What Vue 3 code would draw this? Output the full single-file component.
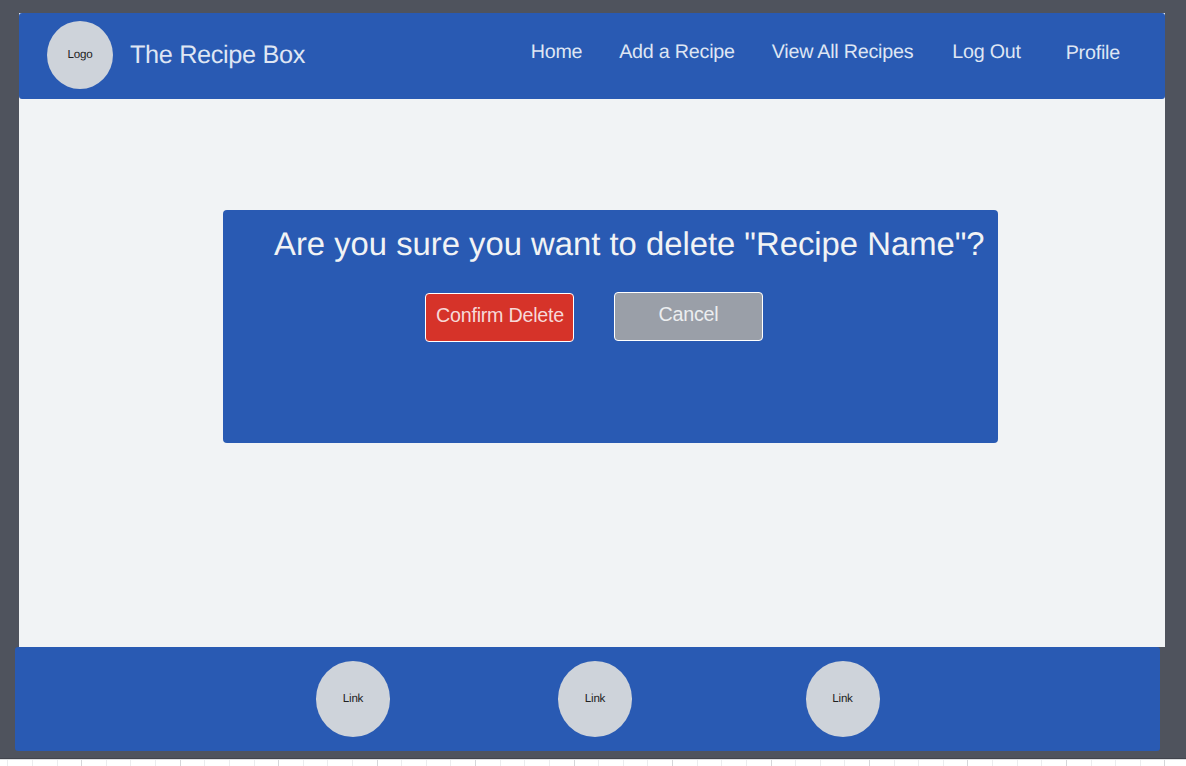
<script setup>
const navItems = [
  { label: 'Home', cls: 'home' },
  { label: 'Add a Recipe', cls: 'add' },
  { label: 'View All Recipes', cls: 'all' },
  { label: 'Log Out', cls: 'logout' },
  { label: 'Profile', cls: 'profile' }
]
const footerLinks = ['first', 'second', 'third']
</script>

<template>
  <div class="canvas">
    <div class="frame">
      <div class="page">
        <header class="header">
          <div class="logo">Logo</div>
          <h1 class="title">The Recipe Box</h1>
          <nav class="nav">
            <a v-for="item in navItems" :key="item.label" :class="item.cls">{{ item.label }}</a>
          </nav>
        </header>
        <main class="dialog">
          <h2 class="question">Are you sure you want to delete "Recipe Name"?</h2>
          <div class="actions">
            <button class="btn confirm">Confirm Delete</button>
            <button class="btn cancel">Cancel</button>
          </div>
        </main>
      </div>
      <footer class="footer">
        <a v-for="name in footerLinks" :key="name" class="link" :class="name">Link</a>
      </footer>
    </div>
    <svg class="ruler" width="1186" height="7" viewBox="0 0 1186 7">
      <rect width="1186" height="1" fill="#dcdee1" />
      <template v-for="n in 48" :key="n">
        <rect
          :x="Math.round(7.3 + (n - 1) * 24.62)"
          y="1"
          width="1"
          height="6"
          :fill="n % 4 === 0 ? '#d5d6d9' : '#ebecee'"
        />
      </template>
    </svg>
  </div>
</template>

<style>
body {
  margin: 0;
  background: #fff;
  overflow: hidden;
}
</style>

<style scoped>
.canvas {
  width: 1186px;
  height: 766px;
  overflow: hidden;
  background: #fff;
  font-family: "Liberation Sans", Arial, sans-serif;
  text-rendering: geometricPrecision;
}
.frame {
  box-sizing: border-box;
  height: 759px;
  padding: 13px 21px 0 15px;
  background: #4f535d;
  border-bottom: 1px solid #41444d;
}
.page {
  width: 1146px;
  height: 634px;
  margin-left: 4px;
  background: #f1f3f5;
}
.header {
  display: flex;
  align-items: flex-start;
  height: 86px;
  border-radius: 3px;
  background: #295ab3;
  color: #dfe6f3;
}
.logo,
.link {
  display: flex;
  justify-content: center;
  border-radius: 50%;
  background: #ced3da;
  color: #222;
  font-size: 11.6px;
  letter-spacing: -0.25px;
  white-space: nowrap;
}
.logo {
  width: 66px;
  height: 68px;
  margin: 8px 0 0 28px;
  line-height: 67px;
}
.title {
  width: 176px;
  margin: 27px 0 0 17px;
  font-size: 25.3px;
  font-weight: 400;
  letter-spacing: -0.36px;
  line-height: 30px;
  white-space: nowrap;
}
.nav {
  display: flex;
  margin: 28px 0 0 224.7px;
  font-size: 19.7px;
  letter-spacing: -0.22px;
  line-height: 22px;
  white-space: nowrap;
}
.home { width: 88.5px; }
.add { width: 152.5px; }
.all { width: 180.5px; }
.logout { width: 113.5px; }
.profile { padding-top: 1px; }
.dialog {
  box-sizing: border-box;
  width: 775.5px;
  height: 233.5px;
  margin: 110.5px 0 0 203.5px;
  padding-top: 14.5px;
  border-radius: 4px;
  background: #295ab3;
}
.question {
  margin: 0 0 0 51.5px;
  color: #f1f3f5;
  font-size: 32.8px;
  font-weight: 400;
  line-height: 40px;
  white-space: nowrap;
}
.actions {
  display: flex;
  gap: 39.5px;
  margin: 28px 0 0 202.5px;
}
.btn {
  box-sizing: border-box;
  width: 149px;
  height: 49px;
  padding: 0 0 5px 1px;
  border: 1.5px solid #fff;
  border-radius: 4px;
  font-family: inherit;
  font-size: 19.7px;
  letter-spacing: -0.24px;
  line-height: 22px;
  white-space: nowrap;
}
.confirm {
  margin-top: 1px;
  background: #d63329;
  color: #f6d9d8;
}
.cancel {
  background: #9a9fa8;
  color: #eceef0;
}
.footer {
  display: flex;
  align-items: flex-start;
  width: 1145px;
  height: 104px;
  border-radius: 3px;
  background: #295ab3;
}
.link {
  width: 74px;
  height: 75.5px;
  margin-top: 14px;
  line-height: 76px;
}
.first { margin-left: 301px; }
.second { margin-left: 168px; }
.third { margin-left: 173.5px; }
.ruler {
  display: block;
}
</style>
